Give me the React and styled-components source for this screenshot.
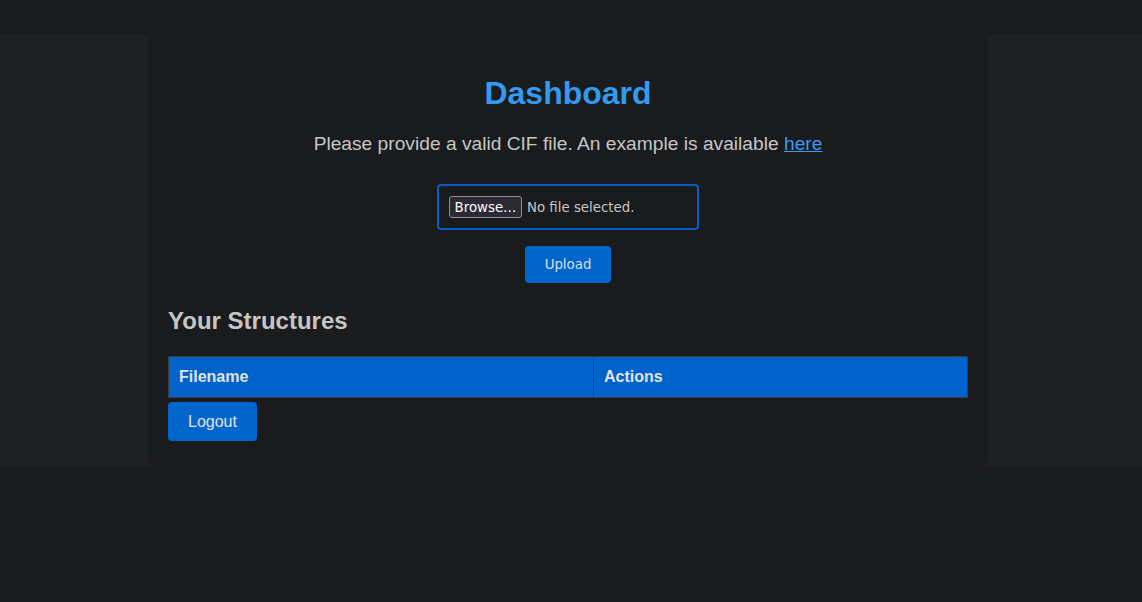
import React, { useState } from "react";
import styled, { createGlobalStyle } from "styled-components";

const GlobalStyle = createGlobalStyle`
  html, body {
    margin: 0;
    padding: 0;
    background: #1a1b1d;
    font-family: "Liberation Sans", Arial, sans-serif;
    color: #c9c9c9;
  }
`;

const Band = styled.div`
  margin-top: 34px;
  padding-right: 6px;
  background: #1f2022;
`;

const Container = styled.main`
  width: 800px;
  margin: 0 auto;
  padding: 20px 20px 25px;
  background: #1a1b1d;
  border-radius: 0 0 8px 8px;
  display: flex;
  flex-direction: column;
`;

const Title = styled.h1`
  margin: 21px 0 0;
  text-align: center;
  font-size: 32px;
  font-weight: 700;
  line-height: 37px;
  color: #339af0;
`;

const Intro = styled.p`
  margin: 21px 0 0;
  text-align: center;
  font-size: 19.2px;
  line-height: 22px;
  color: #c6c6c6;

  a {
    color: #3b9bf5;
  }
`;

const UploadForm = styled.form`
  margin-top: 29px;
  display: flex;
  flex-direction: column;
  align-items: center;
  gap: 16px;
`;

const FileBox = styled.label`
  box-sizing: border-box;
  width: 262px;
  height: 46px;
  padding: 10px;
  border: 2px solid #0a5bc4;
  border-radius: 4px;
  display: flex;
  align-items: center;
  gap: 5px;
  font-family: "DejaVu Sans", sans-serif;
  font-size: 13.33px;
  cursor: pointer;

  input {
    display: none;
  }
`;

const BrowseButton = styled.span`
  box-sizing: border-box;
  width: 73px;
  height: 22px;
  padding: 0 4px;
  display: inline-flex;
  align-items: center;
  justify-content: center;
  background: #2b2a33;
  border: 1px solid #8f8f9d;
  border-radius: 3px;
  color: #fbfbfe;
`;

const FileName = styled.span`
  color: #c6c6c6;
`;

const Button = styled.button`
  box-sizing: border-box;
  height: ${(p) => p.$h}px;
  padding: 0 20px;
  border: none;
  border-radius: 4px;
  background: #0066cc;
  color: ${(p) => (p.$ui ? "#d7dff0" : "#e2e2e2")};
  font-family: ${(p) => (p.$ui ? '"DejaVu Sans", sans-serif' : '"Liberation Sans", Arial, sans-serif')};
  font-size: ${(p) => (p.$ui ? 13.33 : 16)}px;
  cursor: pointer;
  align-self: ${(p) => p.$align || "auto"};
  margin-top: ${(p) => p.$mt || 0}px;
`;

const SectionTitle = styled.h2`
  margin: 24px 0 0;
  font-size: 24px;
  font-weight: 700;
  line-height: 28px;
  color: #c6c6c6;
`;

const Table = styled.table`
  margin-top: 21px;
  width: 100%;
  border-collapse: collapse;
  table-layout: fixed;

  th {
    box-sizing: border-box;
    height: 41px;
    padding: 0 10px;
    background: #0063cc;
    border: 1px solid #3b3c3f;
    text-align: left;
    font-size: 16px;
    font-weight: 700;
    color: #e2e2e2;
  }

  th:first-child {
    width: 425px;
  }
`;

export default function App() {
  const [file, setFile] = useState(null);

  return (
    <>
      <GlobalStyle />
      <Band>
        <Container>
          <Title>Dashboard</Title>
          <Intro>
            Please provide a valid CIF file. An example is available <a href="#">here</a>
          </Intro>
          <UploadForm onSubmit={(e) => e.preventDefault()}>
            <FileBox>
              <input type="file" accept=".cif" onChange={(e) => setFile(e.target.files[0] || null)} />
              <BrowseButton>Browse…</BrowseButton>
              <FileName>{file ? file.name : "No file selected."}</FileName>
            </FileBox>
            <Button type="submit" $ui $h={37}>Upload</Button>
          </UploadForm>
          <SectionTitle>Your Structures</SectionTitle>
          <Table>
            <thead>
              <tr>
                <th>Filename</th>
                <th>Actions</th>
              </tr>
            </thead>
            <tbody />
          </Table>
          <Button type="button" $h={39} $align="flex-start" $mt={4}>Logout</Button>
        </Container>
      </Band>
    </>
  );
}
